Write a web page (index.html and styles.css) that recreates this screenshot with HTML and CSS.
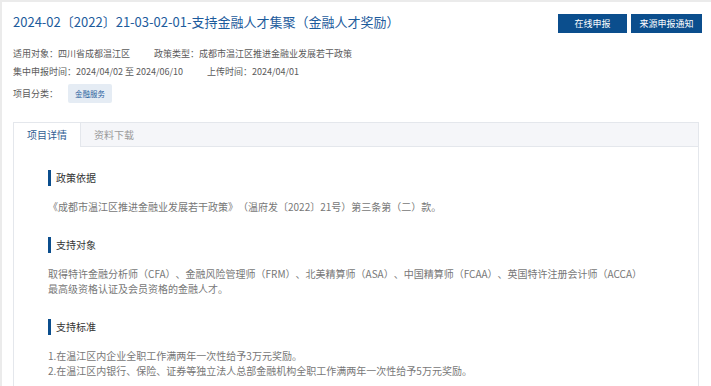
FILE: index.html
```html
<!DOCTYPE html>
<html lang="zh-CN">
<head>
<meta charset="utf-8">
<title>项目详情</title>
<link rel="stylesheet" href="styles.css">
</head>
<body>
<div class="page">
  <div class="head">
    <h1 class="title">2024-02〔2022〕21-03-02-01-支持金融人才集聚（金融人才奖励）</h1>
    <div class="actions">
      <a class="btn btn-a">在线申报</a>
      <a class="btn btn-b">来源申报通知</a>
    </div>
  </div>
  <div class="meta">
    <div class="row r1">
      <span>适用对象：四川省成都温江区</span>
      <span>政策类型：成都市温江区推进金融业发展若干政策</span>
    </div>
    <div class="row r2">
      <span>集中申报时间：2024/04/02 至 2024/06/10</span>
      <span>上传时间：2024/04/01</span>
    </div>
    <div class="row r3">
      <span>项目分类：</span>
      <span class="tag">金融服务</span>
    </div>
  </div>
  <div class="tabs">
    <div class="tab-head">
      <div class="tab active">项目详情</div>
      <div class="tab">资料下载</div>
    </div>
    <div class="tab-body">
      <div class="sec">
        <div class="sec-title">政策依据</div>
        <p class="sec-text">《成都市温江区推进金融业发展若干政策》（温府发〔2022〕21号）第三条第（二）款。</p>
      </div>
      <div class="sec">
        <div class="sec-title">支持对象</div>
        <p class="sec-text">取得特许金融分析师（CFA）、金融风险管理师（FRM）、北美精算师（ASA）、中国精算师（FCAA）、英国特许注册会计师（ACCA）最高级资格认证及会员资格的金融人才。</p>
      </div>
      <div class="sec">
        <div class="sec-title">支持标准</div>
        <p class="sec-text">1.在温江区内企业全职工作满两年一次性给予3万元奖励。<br>2.在温江区内银行、保险、证券等独立法人总部金融机构全职工作满两年一次性给予5万元奖励。</p>
      </div>
    </div>
  </div>
</div>
</body>
</html>
```

FILE: styles.css
```css
html, body {
  margin: 0;
  padding: 0;
}
body {
  background: #ebebeb;
  font-family: "Noto Sans CJK SC", "Noto Sans", sans-serif;
  text-spacing-trim: space-all;
  overflow: hidden;
}
.page {
  margin: 2px 0 0 2px;
  background: #fff;
  padding: 10px 9px 0 11px;
  min-height: 400px;
}
.head {
  display: flex;
  justify-content: space-between;
  align-items: flex-start;
}
.title {
  margin: 0;
  font-size: 13px;
  line-height: 20px;
  font-weight: normal;
  color: #1c5b9c;
}
.actions {
  display: flex;
  gap: 4px;
  margin-top: 2px;
}
.btn {
  display: flex;
  align-items: center;
  justify-content: center;
  height: 19px;
  background: #0b4e8d;
  color: #fff;
  font-size: 9px;
}
.btn-a { width: 69px; }
.btn-b { width: 71px; }
.meta {
  margin-top: 12px;
  font-size: 9px;
  color: #5a5a5a;
}
.row {
  display: flex;
  align-items: center;
  gap: 24px;
  line-height: 18px;
}
.r3 {
  margin-top: 3px;
  gap: 10px;
}
.tag {
  display: inline-block;
  height: 19px;
  line-height: 19px;
  padding: 0 7px;
  font-size: 7.5px;
  color: #2a5f9e;
  background: #e5ecf4;
  border-radius: 2px;
}
.tabs {
  margin: 19px 3px 0 0;
  border: 1px solid #e4e7ec;
  min-height: 300px;
}
.tab-head {
  display: flex;
  height: 23px;
  background: #f5f6f9;
  border-bottom: 1px solid #e4e7ec;
}
.tab {
  padding: 0 13px;
  line-height: 23px;
  font-size: 10px;
  color: #9a9a9a;
}
.tab.active {
  background: #fff;
  color: #2f5d92;
  border-right: 1px solid #e4e7ec;
  margin-bottom: -1px;
}
.tab-body {
  padding: 23px 50px 0 34px;
}
.sec {
  margin-bottom: 23px;
}
.sec-title {
  border-left: 3px solid #0b4e8d;
  padding-left: 5px;
  height: 16px;
  line-height: 16px;
  font-size: 10px;
  color: #333;
  margin-bottom: 13px;
}
.sec-text {
  margin: 0;
  font-size: 10px;
  line-height: 15px;
  color: #777;
}
```
